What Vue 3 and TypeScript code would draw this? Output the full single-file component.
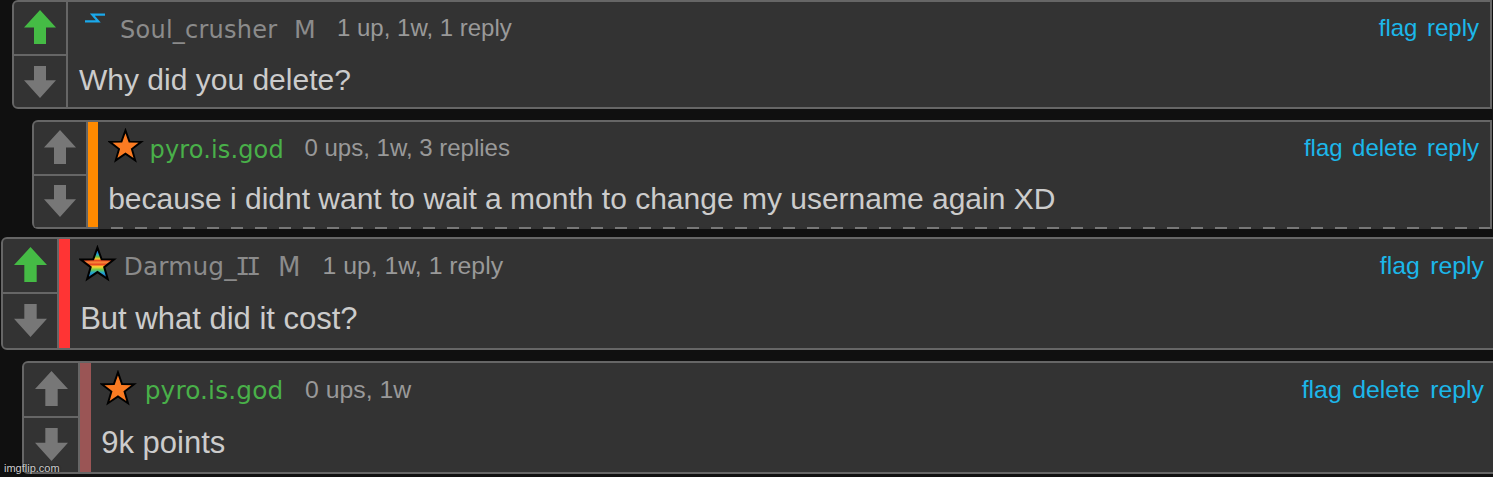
<script setup lang="ts">
interface Comment {
  id: string
  user: string
  numeral?: string
  own?: boolean
  mod?: boolean
  upvoted?: boolean
  stripe?: boolean
  icon: 'bolt' | 'star' | 'rainbow'
  meta: string
  text: string
  links: string[]
}

const comments: Comment[] = [
  { id: 'one', user: 'Soul_crusher', mod: true, upvoted: true, icon: 'bolt', meta: '1 up, 1w, 1 reply', text: 'Why did you delete?', links: ['flag', 'reply'] },
  { id: 'two', user: 'pyro.is.god', own: true, stripe: true, icon: 'star', meta: '0 ups, 1w, 3 replies', text: 'because i didnt want to wait a month to change my username again XD', links: ['flag', 'delete', 'reply'] },
  { id: 'three', user: 'Darmug_', numeral: 'II', mod: true, upvoted: true, stripe: true, icon: 'rainbow', meta: '1 up, 1w, 1 reply', text: 'But what did it cost?', links: ['flag', 'reply'] },
  { id: 'four', user: 'pyro.is.god', own: true, stripe: true, icon: 'star', meta: '0 ups, 1w', text: '9k points', links: ['flag', 'delete', 'reply'] },
]

const star = '18,4 21.7,14.5 32.7,14.7 24,21.4 27.1,32 18,25.8 8.9,32 12,21.4 3.3,14.7 14.3,14.5'
</script>

<template>
  <main class="thread">
    <article v-for="c in comments" :key="c.id" class="comment" :class="c.id">
      <div class="votes">
        <div class="vote">
          <svg class="arrow up" :class="{ on: c.upvoted }" viewBox="0 0 32 34" preserveAspectRatio="none">
            <path d="M16 0 32 17.6H22V34H10V17.6H0Z" />
          </svg>
        </div>
        <div class="vote">
          <svg class="arrow down" viewBox="0 0 32 32" preserveAspectRatio="none">
            <path d="M10 0H22V14.3H32L16 32 0 14.3H10Z" />
          </svg>
        </div>
      </div>
      <div v-if="c.stripe" class="stripe"></div>
      <div class="content">
        <header class="head">
          <svg v-if="c.icon === 'bolt'" class="icon" viewBox="0 0 36 38">
            <path d="M6 8.3H19.2L13.4 1.7H26" fill="none" stroke="#1aa9ec" stroke-width="2.3" />
          </svg>
          <svg v-else class="icon" viewBox="1.7 1.8 33.6 35.47">
            <defs>
              <linearGradient id="rainbow" x1="0" y1="4" x2="0" y2="32" gradientUnits="userSpaceOnUse">
                <stop offset="0.12" stop-color="#2468d0" />
                <stop offset="0.22" stop-color="#22a8d0" />
                <stop offset="0.3" stop-color="#70c040" />
                <stop offset="0.36" stop-color="#ffc830" />
                <stop offset="0.41" stop-color="#e84820" />
                <stop offset="0.47" stop-color="#f88838" />
                <stop offset="0.54" stop-color="#e84820" />
                <stop offset="0.61" stop-color="#ffd830" />
                <stop offset="0.7" stop-color="#70c848" />
                <stop offset="0.8" stop-color="#22a8d0" />
                <stop offset="0.96" stop-color="#2458c0" />
              </linearGradient>
            </defs>
            <polygon :points="star" :fill="c.icon === 'star' ? '#fb7b22' : 'url(#rainbow)'" stroke="#000" stroke-width="1.8" stroke-miterlimit="8" />
          </svg>
          <span class="name" :class="{ own: c.own }">{{ c.user }}<span v-if="c.numeral" class="numeral">{{ c.numeral }}</span></span>
          <span v-if="c.mod" class="name mod">M</span>
          <span class="meta">{{ c.meta }}</span>
          <nav class="links"><a v-for="l in c.links" :key="l">{{ l }}</a></nav>
        </header>
        <p class="text">{{ c.text }}</p>
      </div>
    </article>
    <span class="mark">imgflip.com</span>
  </main>
</template>

<style>
body { margin: 0; background: #101010; overflow: hidden; }
</style>

<style scoped>
.thread {
  position: relative;
  height: 477px;
  overflow: hidden;
  background: #101010;
  font-family: "Liberation Sans", Arial, sans-serif;
}
.comment {
  box-sizing: border-box;
  display: flex;
  height: 109px;
  border: 2px solid #666;
  border-radius: 6px 0 0 6px;
  background: #333;
  font-size: 24px;
  overflow: hidden;
}
.one { margin: 0 1px 0 12px; --cols: 41px 174px 43px 1fr auto; }
.two {
  margin: 11px 1px 0 32px;
  --cols: 42px 155px 1fr auto;
  --stripe: #ff8a00;
  position: relative;
  border-bottom: 0;
}
.two::after {
  content: "";
  position: absolute;
  left: 0;
  right: 0;
  bottom: 0;
  height: 2px;
  background:
    linear-gradient(#666, #666) 0 0 / 64px 2px no-repeat,
    repeating-linear-gradient(90deg, #777 0 12px, #333 12px 24px) 76.5px 0 / 100% 2px no-repeat;
}
.three { margin: 7.5px -2px 0 1px; --cols: 44.2px 154.3px 44.5px 1fr auto; --stripe: #ff3434; }
.four { margin: 11px -2px 0 22px; --cols: 44.2px 160.3px 1fr auto; --stripe: #9a5555; }
.three, .four { height: 113px; font-size: 24.8px; }

.votes {
  flex: none;
  display: grid;
  grid-template-rows: 51.5px 1fr;
  gap: 2px;
  width: 52px;
  border-right: 2px solid #666;
  background: #666;
}
.two .votes { height: 105px; }
.three .votes, .four .votes { width: 54px; grid-template-rows: 53.5px 1fr; }
.vote { display: grid; place-items: center; background: #333; }
.arrow { display: block; width: 32px; fill: #777; }
.up { height: 34px; margin-bottom: 1px; }
.down { height: 32px; margin-top: 1px; }
.two .down { margin-top: 0; }
.three .arrow, .four .arrow { width: 33px; }
.three .up, .four .up { height: 35px; }
.three .down, .four .down { height: 33px; margin-top: 0; }
.on { fill: #45bb45; }
.stripe { flex: none; width: 10px; background: var(--stripe); }
.three .stripe, .four .stripe { width: 11px; }

.content { flex: 1; min-width: 0; padding: 0 11px 0 11px; }
.two .content { padding-left: 9.5px; }
.three .content, .four .content { padding: 0 9px 0 9.5px; }
.head {
  display: grid;
  grid-template-columns: var(--cols);
  height: 60px;
  line-height: 30px;
  white-space: nowrap;
}
.two .head { height: 59px; }
.three .head, .four .head { height: 62.5px; }
.icon { display: block; width: 36px; height: 38px; margin-top: 11px; }
.two .icon { margin-top: 6px; }
.three .icon { width: 38px; height: 40px; margin: 6px 0 0 -1px; }
.four .icon { width: 37px; height: 39px; margin: 7px 0 0 -1px; }
.name {
  padding-top: 13px;
  font-family: "DejaVu Sans", Verdana, sans-serif;
  letter-spacing: 0.15px;
  color: #8b8b8b;
}
.one .name { letter-spacing: 0.25px; }
.name.own { color: #49b049; }
.name.mod { font-size: 1.05em; }
.numeral { font-family: "DejaVu Sans Mono", monospace; letter-spacing: -4px; margin-left: -1.5px; }
.meta { padding-top: 11px; color: #999; }
.three .meta, .three .links { padding-top: 12px; }
.four .meta, .four .links { padding-top: 12px; }
.links { display: flex; gap: 9.5px; padding-top: 11px; }
.three .links, .four .links { gap: 10.5px; }
.links a { color: #1cb7ea; }
.text {
  margin: 0;
  font-size: 30px;
  line-height: 36px;
  color: #ccc;
  white-space: nowrap;
}
.two .text { padding-left: 0.7px; }
.three .text, .four .text { font-size: 31px; padding-left: 0.7px; }
.mark {
  position: absolute;
  left: 4px;
  top: 461px;
  font-size: 11px;
  line-height: 14px;
  color: #ccc;
  text-shadow: 0 0 2px #000;
}
</style>
